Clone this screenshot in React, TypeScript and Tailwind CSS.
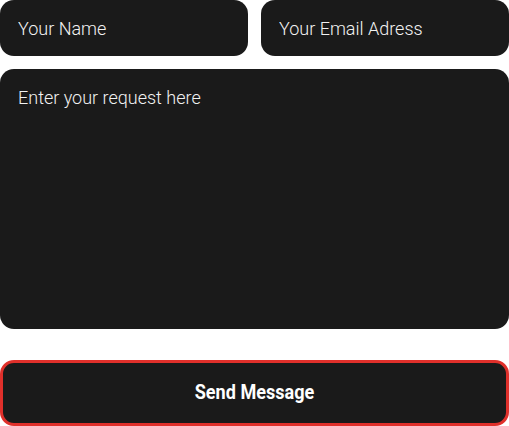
import React from "react";

export default function App() {
  return (
    <div className="w-[509px] h-[426px] bg-white flex flex-col" style={{ fontFamily: "Roboto, 'Liberation Sans', sans-serif" }}>
      <div className="flex gap-[13px] h-[56px]">
        <input
          className="flex-1 min-w-0 h-full rounded-[14px] bg-[#1a1a1a] px-[18px] text-[18px] font-light text-[#f2f2f2] placeholder:text-[#f2f2f2] outline-none"
          placeholder="Your Name"
        />
        <input
          className="flex-1 min-w-0 h-full rounded-[14px] bg-[#1a1a1a] px-[18px] text-[18px] font-light text-[#f2f2f2] placeholder:text-[#f2f2f2] outline-none"
          placeholder="Your Email Adress"
        />
      </div>
      <textarea
        className="mt-[13px] h-[260px] w-full resize-none rounded-[14px] bg-[#1a1a1a] px-[18px] pt-[17px] text-[18px] leading-[24px] font-light text-[#f2f2f2] placeholder:text-[#f2f2f2] outline-none"
        placeholder="Enter your request here"
      />
      <button className="mt-[31px] h-[66px] w-full rounded-[14px] border-[3px] border-[#e0302b] bg-[#1a1a1a] flex items-center justify-center">
        <span className="text-[21px] font-bold text-white scale-x-[0.86] inline-block">Send Message</span>
      </button>
    </div>
  );
}
